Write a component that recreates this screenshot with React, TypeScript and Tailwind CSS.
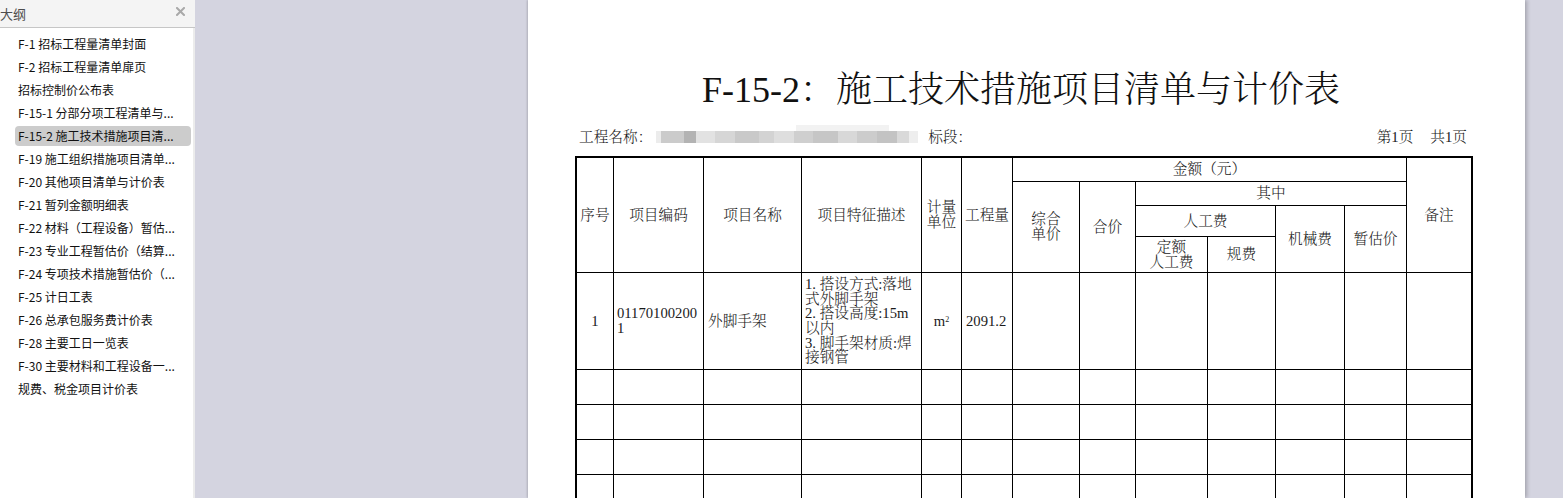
import React from "react";

const items = [
  "F-1 招标工程量清单封面",
  "F-2 招标工程量清单扉页",
  "招标控制价公布表",
  "F-15-1 分部分项工程清单与...",
  "F-15-2 施工技术措施项目清...",
  "F-19 施工组织措施项目清单...",
  "F-20 其他项目清单与计价表",
  "F-21 暂列金额明细表",
  "F-22 材料（工程设备）暂估...",
  "F-23 专业工程暂估价（结算...",
  "F-24 专项技术措施暂估价（...",
  "F-25 计日工表",
  "F-26 总承包服务费计价表",
  "F-28 主要工日一览表",
  "F-30 主要材料和工程设备一...",
  "规费、税金项目计价表",
];

const blur: [number, string][] = [
  [5, "#ececec"],
  [23, "#cbcbcb"],
  [12, "#b3b3b3"],
  [20, "#e2e2e2"],
  [20, "#d6d6d6"],
  [25, "#c9c9c9"],
  [15, "#d3d3d3"],
  [20, "#dedede"],
  [20, "#cfcfcf"],
  [25, "#c6c6c6"],
  [20, "#d8d8d8"],
  [20, "#cccccc"],
  [20, "#c3c3c3"],
  [13, "#d9d9d9"],
  [9, "#eeeeee"],
];

const serif = "[font-family:'Liberation_Serif','Noto_Serif_CJK_SC','Noto_Sans_CJK_SC',serif]";
const cell = "bg-white flex items-center justify-center text-center leading-[15px]";
const lcell = "bg-white flex items-center justify-start text-left leading-[14.6px] pl-[3px]";

export default function App() {
  const emptyRows = [0, 1, 2, 3, 4];
  return (
    <div className="flex h-[498px] w-[1563px] overflow-hidden bg-[#d4d4e0]">
      {/* Sidebar */}
      <div className="flex w-[195px] shrink-0 flex-col [font-family:'Noto_Sans_CJK_SC','Noto_Sans',sans-serif]">
        <div className="relative flex h-[28px] items-center border-b border-[#c6c6c6] bg-[#f4f4f4]">
          <span className="ml-0 text-[13px] leading-none text-[#4d4d4d]">大纲</span>
          <svg className="absolute left-[176px] top-[7px]" width="9" height="9" viewBox="0 0 9 9">
            <path d="M1 1 L8 8 M8 1 L1 8" stroke="#a9a9a9" strokeWidth="2" strokeLinecap="square" />
          </svg>
        </div>
        <div className="flex-1 border-r-2 border-[#ececec] bg-white pt-[6px]">
          {items.map((t, i) => (
            <div
              key={i}
              className={`mb-[3px] ml-[15px] h-[20px] w-[176px] rounded-[4px] px-[3px] text-[12px] leading-[20px] whitespace-nowrap text-[#111] ${
                i === 4 ? "bg-[#cccccc]" : ""
              }`}
            >
              {t}
            </div>
          ))}
        </div>
      </div>

      {/* Workspace */}
      <div className="flex flex-1 pl-[333px]">
        <div className={`h-full w-[997px] shrink-0 bg-white shadow-[2px_0_4px_rgba(0,0,0,0.22),-1px_0_2px_rgba(0,0,0,0.15)] ${serif} font-light text-[#1a1a1a]`}>
          <div className="ml-[47px] w-[898px]">
            <div className="mt-[72px] h-[37px] pr-[6px] text-center text-[36px] leading-[37px] whitespace-nowrap text-[#111]">
              F-15-2：施工技术措施项目清单与计价表
            </div>
            <div className="mt-[19px] flex h-[18px] items-center pl-[4px] pr-[6px] text-[14.67px] leading-[18px]">
              <span>工程名称：</span>
              <div className="relative ml-[4px] flex h-[12px] w-[262px]">
                <div className="absolute left-[140px] top-[-6px] h-[6px] w-[93px] bg-[#f2f2f2]" />
                {blur.map(([w, c], i) => (
                  <div key={i} className="h-full" style={{ width: w, background: c }} />
                ))}
              </div>
              <span className="ml-[10px]">标段：</span>
              <span className="ml-auto">第1页</span>
              <span className="ml-[17px]">共1页</span>
            </div>

            {/* Table */}
            <div className="mt-[10px] grid grid-cols-[36px_89px_97px_119px_39px_50px_66px_55px_71px_67px_68px_61px_64px] grid-rows-[23px_23px_30px_35px_96px_34px_34px_34px_34px_34px] gap-px bg-black p-[2px] pb-0 text-[14.67px]">
              <div className={`${cell} col-start-1 row-start-1 row-span-4`}>序号</div>
              <div className={`${cell} col-start-2 row-start-1 row-span-4`}>项目编码</div>
              <div className={`${cell} col-start-3 row-start-1 row-span-4`}>项目名称</div>
              <div className={`${cell} col-start-4 row-start-1 row-span-4`}>项目特征描述</div>
              <div className={`${cell} col-start-5 row-start-1 row-span-4`}>
                计量
                <br />
                单位
              </div>
              <div className={`${cell} col-start-6 row-start-1 row-span-4`}>工程量</div>
              <div className={`${cell} col-start-7 col-span-6 row-start-1`}>金额（元）</div>
              <div className={`${cell} col-start-13 row-start-1 row-span-4`}>备注</div>
              <div className={`${cell} col-start-7 row-start-2 row-span-3`}>
                综合
                <br />
                单价
              </div>
              <div className={`${cell} col-start-8 row-start-2 row-span-3`}>合价</div>
              <div className={`${cell} col-start-9 col-span-4 row-start-2`}>其中</div>
              <div className={`${cell} col-start-9 col-span-2 row-start-3`}>人工费</div>
              <div className={`${cell} col-start-11 row-start-3 row-span-2`}>机械费</div>
              <div className={`${cell} col-start-12 row-start-3 row-span-2`}>暂估价</div>
              <div className={`${cell} col-start-9 row-start-4`}>
                定额
                <br />
                人工费
              </div>
              <div className={`${cell} col-start-10 row-start-4`}>规费</div>

              {/* data row */}
              <div className={`${cell} col-start-1 row-start-5`}>1</div>
              <div className={`${lcell} col-start-2 row-start-5 whitespace-nowrap`}>
                01170100200
                <br />
                1
              </div>
              <div className={`${lcell} col-start-3 row-start-5 pl-[4px]`}>外脚手架</div>
              <div className={`${lcell} col-start-4 row-start-5 whitespace-nowrap`}>
                1. 搭设方式:落地
                <br />
                式外脚手架
                <br />
                2. 搭设高度:15m
                <br />
                以内
                <br />
                3. 脚手架材质:焊
                <br />
                接钢管
              </div>
              <div className={`${cell} col-start-5 row-start-5`}>
                <span>
                  m<sup className="text-[8px]">2</sup>
                </span>
              </div>
              <div className={`${lcell} col-start-6 row-start-5 pl-[4px]`}>2091.2</div>
              <div className={`${cell} col-start-7 row-start-5`} />
              <div className={`${cell} col-start-8 row-start-5`} />
              <div className={`${cell} col-start-9 row-start-5`} />
              <div className={`${cell} col-start-10 row-start-5`} />
              <div className={`${cell} col-start-11 row-start-5`} />
              <div className={`${cell} col-start-12 row-start-5`} />
              <div className={`${cell} col-start-13 row-start-5`} />

              {emptyRows.map((r) =>
                Array.from({ length: 13 }).map((_, c) => <div key={`${r}-${c}`} className="bg-white" />)
              )}
            </div>
          </div>
        </div>
      </div>
    </div>
  );
}
